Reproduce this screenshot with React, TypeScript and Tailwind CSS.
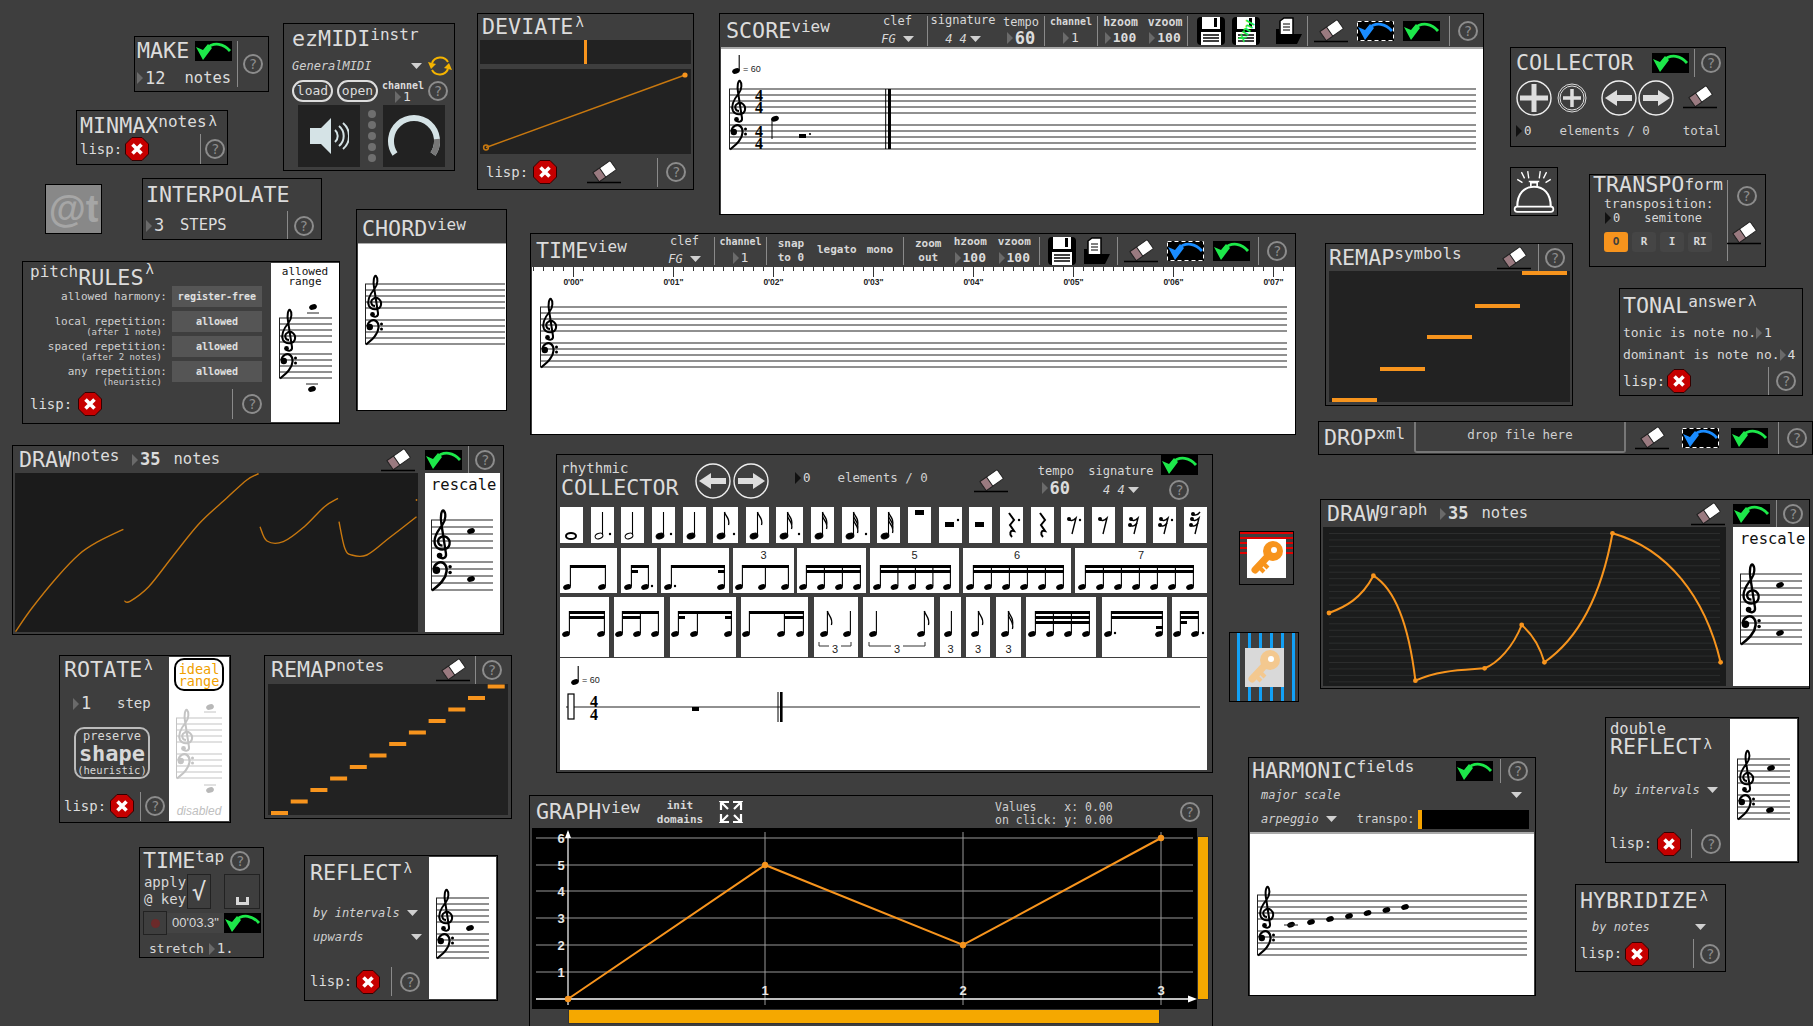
import React from "react";
import clsx from "clsx";

type Kids = { className?: string; children?: React.ReactNode };

const Win = ({ className, children }: Kids) => (
  <div className={clsx("absolute overflow-hidden border border-black bg-[#3e3e3e]", className)}>{children}</div>
);

const Title = ({ t, pre, sup, lam, className }: { t: string; pre?: string; sup?: string; lam?: boolean; className?: string }) => (
  <div className={clsx("flex items-start whitespace-nowrap text-[21.7px] leading-[24px] text-[#dcdcdc]", className)}>
    {pre && <span className="mt-[1px] text-[16px] leading-[18px]">{pre}</span>}
    <span className={pre ? "mt-[4px]" : ""}>{t}</span>
    {sup && <span className="text-[16px] leading-[16px]">{sup}</span>}
    {lam && <span className="ml-[2px] text-[14px] leading-[14px]">λ</span>}
  </div>
);

const Sep = ({ className }: { className?: string }) => <div className={clsx("w-px shrink-0 bg-[#8a8a8a]", className)} />;

const Help = ({ className }: { className?: string }) => (
  <div className={clsx("flex h-[20px] w-[20px] shrink-0 items-center justify-center rounded-full border-2 border-[#8c8c8c] text-[14px] leading-none text-[#8c8c8c]", className)}>
    ?
  </div>
);

const Tri = ({ dark }: { dark?: boolean }) => (
  <svg width="6" height="12" viewBox="0 0 6 12" className="shrink-0">
    <polygon points="0,0 6,6 0,12" fill={dark ? "#111" : "#6a6a6a"} />
  </svg>
);

const Drop = ({ className }: { className?: string }) => (
  <svg width="11" height="6" viewBox="0 0 11 6" className={clsx("shrink-0", className)}>
    <polygon points="0,0 11,0 5.5,6" fill="#d0d0d0" />
  </svg>
);

const Octagon = () => (
  <svg width="24" height="24" viewBox="0 0 24 24" className="shrink-0">
    <polygon points="7,0.5 17,0.5 23.5,7 23.5,17 17,23.5 7,23.5 0.5,17 0.5,7" fill="#c60000" stroke="#300" />
    <path d="M7.5 7.5 L16.5 16.5 M16.5 7.5 L7.5 16.5" stroke="white" strokeWidth="3.6" />
  </svg>
);

const Lisp = ({ gap }: { gap?: string }) => (
  <div className={clsx("flex items-center text-[14px] text-[#dcdcdc]", gap ?? "gap-[5px]")}>
    <span>lisp:</span>
    <Octagon />
  </div>
);

const Eraser = ({ className }: { className?: string }) => (
  <svg width="34" height="24" viewBox="0 0 34 24" className={clsx("shrink-0", className)}>
    <g transform="rotate(-35 17 11)">
      <rect x="7" y="6" width="21" height="11" rx="1" fill="white" stroke="#222" />
      <rect x="7" y="6" width="8" height="11" fill="#9a7a80" stroke="#222" />
    </g>
    <line x1="0" y1="22.5" x2="34" y2="22.5" stroke="black" strokeWidth="1.5" />
  </svg>
);

const Undo = ({ blue, className }: { blue?: boolean; className?: string }) => {
  const c = blue ? "#1a8cff" : "#1de84a";
  return (
    <svg width="37" height="20" viewBox="0 0 37 20" className={clsx("shrink-0", className)}>
      <rect width="37" height="20" fill="black" />
      {blue && <rect x="0.5" y="0.5" width="36" height="19" fill="none" stroke="white" strokeDasharray="4 3" />}
      <path d="M35 10 C29 3 19 0 11 8" fill="none" stroke={c} strokeWidth="2.8" />
      <polygon points="1,6 8,9 13,3 17,7 8,19" fill={c} />
    </svg>
  );
};

const Save = ({ xml }: { xml?: boolean }) => (
  <svg width="28" height="28" viewBox="0 0 28 28" className="shrink-0">
    <rect width="28" height="28" rx="4" fill="black" />
    <rect x="5" y="0" width="18" height="12" fill="white" />
    <rect x="17" y="1" width="3" height="9" fill="black" />
    <rect x="4" y="15" width="20" height="13" fill="white" />
    <path d="M6 18H22M6 21H22M6 24H22" stroke="black" strokeWidth="1.4" />
    {xml && (
      <text x="14" y="18" textAnchor="middle" fontSize="13" fontFamily="Liberation Sans" fontWeight="bold" fill="#1de84a" transform="rotate(-60 14 14)">
        xml
      </text>
    )}
  </svg>
);

const Folder = () => (
  <svg width="28" height="28" viewBox="0 0 28 28" className="shrink-0">
    <path d="M5 24V4L9 1H18V20H5" fill="white" stroke="black" strokeWidth="1.5" />
    <path d="M8 7H15M8 10H15M8 13H15" stroke="black" />
    <polygon points="5,27 1,27 1,12 4,12 5,17 27,17 22,27" fill="black" />
  </svg>
);

const Treble = ({ x, y, s = 1, c = "black" }: { x: number; y: number; s?: number; c?: string }) => (
  <g transform={`translate(${x} ${y}) scale(${s})`}>
    <path
      d="M9 31 C5 31 4 26 7 24 C11 21 16 25 15 30 C14 35 6 36 3 31 C0 25 5 18 9 13 C12 9 12 3 10 1 C8 0 7 6 8 12 L12 38 C12.5 42 8 43 6 40"
      fill="none"
      stroke={c}
      strokeWidth="2"
    />
    <circle cx="6.5" cy="39.5" r="2.4" fill={c} />
  </g>
);

const Bass = ({ x, y, s = 1, c = "black" }: { x: number; y: number; s?: number; c?: string }) => (
  <g transform={`translate(${x} ${y}) scale(${s})`}>
    <circle cx="3.8" cy="7" r="3.2" fill={c} />
    <path d="M1.5 6 C2 1 7 -1 10 1 C14 4 13 11 9 16 C7 19 3 22 0 24.5" fill="none" stroke={c} strokeWidth="2.2" />
    <circle cx="15.5" cy="4" r="1.5" fill={c} />
    <circle cx="15.5" cy="9" r="1.5" fill={c} />
  </g>
);

const Head = ({ x, y, c = "black" }: { x: number; y: number; c?: string }) => (
  <ellipse cx={x} cy={y} rx="4" ry="2.7" transform={`rotate(-20 ${x} ${y})`} fill={c} />
);

const Staff = ({
  w,
  gap = 6,
  className,
  c = "#222",
  children,
}: {
  w: number;
  gap?: number;
  className?: string;
  c?: string;
  children?: React.ReactNode;
}) => {
  const top = 12;
  const rows = [0, 1, 2, 3, 4, 6, 7, 8, 9, 10];
  const s = gap / 6;
  return (
    <svg width={w} height={top + gap * 10 + 10} className={clsx("block shrink-0 overflow-visible", className)}>
      {rows.map((r) => (
        <line key={r} x1="0" x2={w} y1={top + r * gap} y2={top + r * gap} stroke={c} strokeWidth="1.2" />
      ))}
      <line x1="0.5" x2="0.5" y1={top} y2={top + gap * 10} stroke={c} />
      <Treble x={1} y={top - 9 * s} s={s} c={c === "#222" ? "black" : c} />
      <Bass x={1} y={top + gap * 6} s={s} c={c === "#222" ? "black" : c} />
      {children}
    </svg>
  );
};

const TempoMark = ({ className }: { className?: string }) => (
  <svg width="40" height="20" viewBox="0 0 40 20" className={clsx("block shrink-0", className)}>
    <Head x={4} y={16} />
    <line x1="7.2" x2="7.2" y1="15" y2="0" stroke="black" strokeWidth="1.1" />
    <text x="11" y="17" fontSize="9" fontFamily="Liberation Sans" fill="#222">
      = 60
    </text>
  </svg>
);

const Circ = ({ dir, r = 17 }: { dir: "l" | "r" | "p"; r?: number }) => (
  <svg width={r * 2 + 2} height={r * 2 + 2} viewBox="-18 -18 36 36" className="shrink-0">
    <circle r="17" fill="none" stroke="#eee" strokeWidth="1.4" />
    {dir === "p" && <path d="M0 -14V14M-14 0H14" stroke="#ddd" strokeWidth="5" />}
    {dir === "l" && <polygon points="-14,0 -2,-8 -2,-3 13,-3 13,3 -2,3 -2,8" fill="#ddd" />}
    {dir === "r" && <polygon points="14,0 2,-8 2,-3 -13,-3 -13,3 2,3 2,8" fill="#ddd" />}
  </svg>
);

const SmallPlus = () => (
  <svg width="30" height="30" viewBox="-15 -15 30 30" className="shrink-0">
    <circle r="14" fill="none" stroke="#ddd" />
    <circle r="12" fill="none" stroke="#ddd" />
    <path d="M0 -9V9M-9 0H9" stroke="#ddd" strokeWidth="3.5" />
  </svg>
);

const Ruler = () => {
  const minor = Array.from({ length: 76 }, (_, i) => 1.5 + i * 10);
  return (
    <svg width="764" height="26" className="block shrink-0">
      {minor.map((x, i) => (
        <line key={i} x1={x} x2={x} y1="0" y2={i % 10 === 4 ? 10 : 4} stroke="#333" />
      ))}
      {[0, 1, 2, 3, 4, 5, 6, 7].map((i) => (
        <text key={i} x={41.5 + i * 100} y="18" textAnchor="middle" fontSize="8.5" fontWeight="bold" fontFamily="Liberation Sans" fill="#222">
          {`0'0${i}"`}
        </text>
      ))}
    </svg>
  );
};

// rhythm cells
type Single = { w: number; hollow?: boolean; stem?: boolean; dot?: boolean; flags?: number; whole?: boolean };

const singles: Single[] = [
  { w: 23, whole: true },
  { w: 23, hollow: true, stem: true, dot: true },
  { w: 23, hollow: true, stem: true },
  { w: 23, stem: true, dot: true },
  { w: 23, stem: true },
  { w: 25, stem: true, dot: true, flags: 1 },
  { w: 23, stem: true, flags: 1 },
  { w: 27, stem: true, dot: true, flags: 2 },
  { w: 23, stem: true, flags: 2 },
  { w: 28, stem: true, dot: true, flags: 3 },
  { w: 23, stem: true, flags: 3 },
];

const SingleNote = ({ n }: { n: Single }) => (
  <div className="h-full bg-white" style={{ width: n.w }}>
    <svg width={n.w} height="36">
      {n.whole ? (
        <ellipse cx="11" cy="29" rx="5" ry="3" fill="none" stroke="black" strokeWidth="2" />
      ) : (
        <>
          <ellipse cx="8" cy="29" rx="4" ry="2.7" transform="rotate(-20 8 29)" fill={n.hollow ? "white" : "black"} stroke="black" />
          <line x1="11.5" x2="11.5" y1="28" y2="5" stroke="black" strokeWidth="1.1" />
          {Array.from({ length: n.flags ?? 0 }, (_, i) => (
            <path key={i} d={`M11.5 ${5 + i * 4} c1 5 6 6 4 13`} fill="none" stroke="black" strokeWidth="1.3" />
          ))}
          {n.dot && <circle cx={n.w - 4} cy="27" r="1.2" fill="black" />}
        </>
      )}
    </svg>
  </div>
);

const rests: { w: number; kind: string; dot?: boolean }[] = [
  { w: 23, kind: "whole" },
  { w: 23, kind: "half", dot: true },
  { w: 23, kind: "half" },
  { w: 23, kind: "q", dot: true },
  { w: 23, kind: "q" },
  { w: 23, kind: "e", dot: true },
  { w: 23, kind: "e" },
  { w: 23, kind: "s" },
  { w: 23, kind: "s", dot: true },
  { w: 23, kind: "t" },
];

const Rest = ({ r }: { r: { w: number; kind: string; dot?: boolean } }) => (
  <div className="h-full bg-white" style={{ width: r.w }}>
    <svg width={r.w} height="36">
      {r.kind === "whole" && <rect x="7" y="3" width="9" height="5" fill="black" />}
      {r.kind === "half" && <rect x="6" y="15" width="9" height="5" fill="black" />}
      {r.kind === "q" && <path d="M9 6 L14 13 L10 18 L14 24 C10 23 9 27 12 30" fill="none" stroke="black" strokeWidth="2" />}
      {(r.kind === "e" || r.kind === "s" || r.kind === "t") && (
        <>
          <path d="M7 12 C10 15 13 13 15 11 L11 27" fill="none" stroke="black" strokeWidth="1.4" />
          <circle cx="8" cy="12" r="2" fill="black" />
        </>
      )}
      {(r.kind === "s" || r.kind === "t") && (
        <>
          <path d="M6 18 C9 20 12 19 14 16" fill="none" stroke="black" strokeWidth="1.4" />
          <circle cx="7" cy="18" r="2" fill="black" />
        </>
      )}
      {r.kind === "t" && (
        <>
          <path d="M8 7 C10 9 14 8 16 5" fill="none" stroke="black" strokeWidth="1.4" />
          <circle cx="9" cy="7" r="2" fill="black" />
        </>
      )}
      {r.dot && <circle cx={r.w - 4} cy="13" r="1.2" fill="black" />}
    </svg>
  </div>
);

type Beam = { from: number; to: number; lvl: number };
type Group = {
  w: number;
  xs: number[];
  beams?: Beam[];
  label?: string;
  dots?: number[];
  flags?: number[];
  bracket?: [number, number];
  bottom?: string;
};

const Cell = ({ g, h, headY, topY }: { g: Group; h: number; headY: number; topY: number }) => (
  <div className="h-full shrink-0 bg-white" style={{ width: g.w }}>
    <svg width={g.w} height={h}>
      {g.label && (
        <text x={g.w / 2} y="11" fontSize="11" textAnchor="middle" fontFamily="Liberation Sans" fill="#222">
          {g.label}
        </text>
      )}
      {g.xs.map((x) => (
        <g key={x}>
          <Head x={x} y={headY} />
          <line x1={x + 3.4} x2={x + 3.4} y1={headY - 1} y2={topY} stroke="black" strokeWidth="1.1" />
        </g>
      ))}
      {g.beams?.map((b, i) => (
        <rect key={i} x={b.from + 3} y={topY + b.lvl * 5} width={b.to - b.from + 1} height="3" fill="black" />
      ))}
      {g.flags?.map((x, i) => (
        <path key={i} d={`M${x + 3.4} ${topY + i * 4} c1 5 6 7 4 14`} fill="none" stroke="black" strokeWidth="1.3" />
      ))}
      {g.dots?.map((x) => (
        <circle key={x} cx={x} cy={headY - 1} r="1.2" fill="black" />
      ))}
      {g.bracket && (
        <path
          d={`M${g.bracket[0]} 45 v4 h${(g.bracket[1] - g.bracket[0]) / 2 - 6} m12 0 h${(g.bracket[1] - g.bracket[0]) / 2 - 6} v-4`}
          fill="none"
          stroke="#333"
        />
      )}
      {g.bottom && (
        <text x={g.bracket ? (g.bracket[0] + g.bracket[1]) / 2 : g.w / 2} y="56" fontSize="11" textAnchor="middle" fontFamily="Liberation Sans" fill="#222">
          {g.bottom}
        </text>
      )}
    </svg>
  </div>
);

const even = (n: number, step: number, from: number) => Array.from({ length: n }, (_, i) => from + i * step);

const row2: Group[] = [
  { w: 57, xs: [7, 42], beams: [{ from: 7, to: 42, lvl: 0 }] },
  { w: 36, xs: [7, 24], beams: [{ from: 7, to: 24, lvl: 0 }, { from: 7, to: 13, lvl: 1 }], dots: [31] },
  { w: 68, xs: [7, 60], beams: [{ from: 7, to: 60, lvl: 0 }, { from: 54, to: 60, lvl: 1 }], dots: [14] },
  { w: 61, xs: [6, 29, 52], beams: [{ from: 6, to: 52, lvl: 0 }], label: "3" },
  { w: 69, xs: even(4, 18, 6), beams: [{ from: 6, to: 60, lvl: 0 }, { from: 6, to: 60, lvl: 1 }] },
  { w: 89, xs: even(5, 17.5, 7), beams: [{ from: 7, to: 77, lvl: 0 }, { from: 7, to: 77, lvl: 1 }], label: "5" },
  { w: 108, xs: even(6, 18, 7), beams: [{ from: 7, to: 97, lvl: 0 }, { from: 7, to: 97, lvl: 1 }], label: "6" },
  { w: 132, xs: even(7, 18, 7), beams: [{ from: 7, to: 115, lvl: 0 }, { from: 7, to: 115, lvl: 1 }], label: "7" },
];

const row3: Group[] = [
  { w: 49, xs: [6, 41], beams: [{ from: 6, to: 41, lvl: 0 }, { from: 6, to: 41, lvl: 1 }] },
  { w: 50, xs: [5, 23, 41], beams: [{ from: 5, to: 41, lvl: 0 }, { from: 5, to: 23, lvl: 1 }] },
  { w: 66, xs: [5, 24, 58], beams: [{ from: 5, to: 58, lvl: 0 }, { from: 5, to: 11, lvl: 1 }, { from: 52, to: 58, lvl: 1 }] },
  { w: 67, xs: [5, 40, 59], beams: [{ from: 5, to: 59, lvl: 0 }, { from: 40, to: 59, lvl: 1 }] },
  { w: 44, xs: [10, 33], flags: [10], bracket: [5, 37], bottom: "3" },
  { w: 71, xs: [10, 58], flags: [58], bracket: [6, 62], bottom: "3" },
  { w: 21, xs: [8], bottom: "3" },
  { w: 24, xs: [9], flags: [9], bottom: "3" },
  { w: 25, xs: [9], flags: [9, 9], bottom: "3" },
  { w: 70, xs: even(4, 18, 6), beams: [{ from: 6, to: 60, lvl: 0 }, { from: 6, to: 60, lvl: 1 }, { from: 6, to: 60, lvl: 2 }] },
  { w: 65, xs: [6, 57], beams: [{ from: 6, to: 57, lvl: 0 }, { from: 6, to: 57, lvl: 1 }, { from: 51, to: 57, lvl: 3 }], dots: [13] },
  { w: 35, xs: [5, 23], beams: [{ from: 5, to: 23, lvl: 0 }, { from: 5, to: 23, lvl: 1 }, { from: 5, to: 11, lvl: 2 }], dots: [31] },
];

const GraphPlot = () => {
  const xs = [36, 233, 431, 629];
  const ys = [10, 37, 63, 90, 117, 144];
  const labels = ["6", "5", "4", "3", "2", "1"];
  return (
    <svg width="665" height="181" className="block">
      <rect width="665" height="181" fill="black" />
      {ys.map((y) => (
        <line key={y} x1="4" x2="661" y1={y} y2={y} stroke="#666" strokeWidth="1.3" />
      ))}
      {xs.slice(1).map((x) => (
        <line key={x} x1={x} x2={x} y1="4" y2="177" stroke="#999" />
      ))}
      <line x1="36" x2="36" y1="4" y2="177" stroke="white" strokeWidth="1.2" />
      <polygon points="36,2 33,10 39,10" fill="white" />
      <line x1="4" x2="660" y1="171" y2="171" stroke="white" strokeWidth="1.3" />
      <polygon points="665,171 656,167.5 656,174.5" fill="white" />
      {labels.map((l, i) => (
        <text key={l} x="29" y={ys[i] + 5} fontSize="13" fontWeight="bold" textAnchor="middle" fontFamily="Liberation Sans" fill="#e8e8e8">
          {l}
        </text>
      ))}
      {["1", "2", "3"].map((l, i) => (
        <text key={l} x={xs[i + 1]} y="167" fontSize="13" fontWeight="bold" textAnchor="middle" fontFamily="Liberation Sans" fill="#e8e8e8">
          {l}
        </text>
      ))}
      <polyline points="36,171 233,37 431,117 629,10" fill="none" stroke="#f7941d" strokeWidth="2" />
      {[[36, 171], [233, 37], [431, 117], [629, 10]].map(([x, y]) => (
        <circle key={x} cx={x} cy={y} r="3.2" fill="#f7941d" />
      ))}
    </svg>
  );
};

const Key = ({ c }: { c: string }) => (
  <svg width="34" height="36" viewBox="0 0 34 36">
    <path d="M19 15 L5 30" stroke={c} strokeWidth="7" strokeLinecap="round" />
    <path d="M10 28 L14 32 M14 24 L18 28" stroke={c} strokeWidth="4" />
    <circle cx="23" cy="11" r="10" fill={c} />
    <circle cx="24" cy="10" r="3" fill="white" />
  </svg>
);

const remapNotes = Array.from({ length: 12 }, (_, i) => ({ x: 3 + i * 19.7, y: 127 - i * 11.5 }));

const DrawGraphPanel = () => {
  const stripes = Array.from({ length: 24 }, (_, i) => 6.5 + i * 6.45);
  return (
    <svg width="403" height="159" className="block shrink-0">
      <rect width="403" height="159" fill="#1b1c1c" />
      {stripes.map((y) => (
        <line key={y} x1="6" x2="397" y1={y} y2={y} stroke="#2c2d2d" />
      ))}
      <path
        d="M6 86 C22 80 38 72 50.4 48.7 C72 62 86 100 92.4 153.7 C115 143 140 143 161.6 141.3 C175 136 190 120 198.7 98 C208 106 217 120 221.4 135.3 C255 112 278 70 289.5 6.3 C345 22 382 70 397.6 135.3"
        fill="none"
        stroke="#f7941d"
        strokeWidth="2"
      />
      {[[6, 86], [50.4, 48.7], [92.4, 153.7], [161.6, 141.3], [198.7, 98], [221.4, 135.3], [289.5, 6.3], [397.6, 135.3]].map(([x, y]) => (
        <circle key={x} cx={x} cy={y} r="2.4" fill="#f7941d" />
      ))}
    </svg>
  );
};

// smooth line through the sampled points of a drawn stroke
const smooth = (p: number[][]) => {
  let d = `M${p[0][0]} ${p[0][1]}`;
  for (let i = 0; i < p.length - 1; i++) {
    const a = p[Math.max(i - 1, 0)];
    const b = p[i];
    const c = p[i + 1];
    const e = p[Math.min(i + 2, p.length - 1)];
    d += ` C${b[0] + (c[0] - a[0]) / 6} ${b[1] + (c[1] - a[1]) / 6} ${c[0] - (e[0] - b[0]) / 6} ${c[1] - (e[1] - b[1]) / 6} ${c[0]} ${c[1]}`;
  }
  return d;
};

const strokes = [
  [[0.5, 158.7], [17, 135], [42.5, 103.7], [64.5, 81], [83, 68.7], [108.4, 56.3]],
  [[109.4, 128], [115, 128.3], [133.7, 113.7], [157.4, 83.7], [184.5, 50.3], [211.5, 25.3], [231.8, 7], [243.6, 0.6]],
  [[245, 53.7], [252, 68], [268.3, 68.7], [289.3, 53.7], [309.5, 33.7], [323, 25.3]],
  [[324, 48.7], [329.8, 75.3], [336.6, 82], [351.8, 82], [373.8, 65.3], [401.5, 43.7]],
];

const DrawNotesPanel = () => (
  <svg width="403" height="159" className="block shrink-0">
    <rect width="403" height="159" fill="#1b1b1b" />
    {strokes.map((s, i) => (
      <path key={i} d={smooth(s)} fill="none" stroke="#c8780f" strokeWidth="1.4" />
    ))}
    <circle cx="401.5" cy="27" r="0.9" fill="#c8780f" />
  </svg>
);

const HLabel = ({ className, children }: Kids) => <div className={clsx("text-center leading-[14px] text-[#d8d8d8]", className)}>{children}</div>;

const Num = ({ v, className, dark }: { v: string; className?: string; dark?: boolean }) => (
  <div className={clsx("flex items-center gap-[2px] whitespace-nowrap text-[#dcdcdc]", className)}>
    <Tri dark={dark} />
    <span>{v}</span>
  </div>
);

export default function App() {
  return (
    <div className="relative h-[1026px] w-[1813px] overflow-hidden bg-[#3e3e3e] font-['DejaVu_Sans_Mono',monospace]">
      {/* MAKE */}
      <Win className="left-[134px] top-[36px] flex h-[56px] w-[135px]">
        <div className="flex w-[102px] flex-col pl-[2px] pt-[2px]">
          <div className="flex items-center gap-[6px]">
            <Title t="MAKE" />
            <Undo />
          </div>
          <div className="mt-[5px] flex items-center">
            <Num v="12" className="text-[17px] leading-[20px]" />
            <span className="ml-[19px] text-[15.5px] leading-[20px] text-[#dcdcdc]">notes</span>
          </div>
        </div>
        <Sep className="my-[4px]" />
        <Help className="ml-[5px] mt-[17px]" />
      </Win>

      {/* MINMAX */}
      <Win className="left-[76px] top-[110px] h-[55px] w-[152px] pl-[3px] pt-[3px]">
        <Title t="MINMAX" sup="notes" lam />
        <div className="mt-[-4px] flex items-center">
          <Lisp gap="gap-[3px]" />
          <Sep className="ml-[51px] h-[30px]" />
          <Help className="ml-[4px]" />
        </div>
      </Win>

      {/* ezMIDI */}
      <Win className="left-[283px] top-[23px] h-[148px] w-[172px] pl-[8px] pt-[3px]">
        <Title t="ezMIDI" sup="instr" />
        <div className="mt-[1px] flex h-[27px] items-center text-[12px] italic text-[#d0d0d0]">
          <span>GeneralMIDI</span>
          <Drop className="ml-[40px]" />
          <svg width="24" height="26" viewBox="0 0 24 26" className="ml-[6px]">
            <path d="M4 10 A9 9 0 0 1 20 9 M20 16 A9 9 0 0 1 4 17" fill="none" stroke="#f5b400" strokeWidth="2" />
            <polygon points="0,9 8,11 3,16" fill="#f5b400" />
            <polygon points="24,17 16,15 21,10" fill="#f5b400" />
          </svg>
        </div>
        <div className="flex h-[24px] items-center gap-[4px] text-[13px] text-[#dcdcdc]">
          <div className="flex h-[22px] w-[41px] shrink-0 items-center justify-center rounded-[12px] border-2 border-[#ddd]">load</div>
          <div className="flex h-[22px] w-[41px] shrink-0 items-center justify-center rounded-[12px] border-2 border-[#ddd]">open</div>
          <div className="flex w-[42px] shrink-0 flex-col items-center">
            <span className="text-[10px] font-bold leading-[11px]">channel</span>
            <Num v="1" className="text-[13px] leading-[12px]" />
          </div>
          <Help />
        </div>
        <div className="ml-[6px] mt-[2px] flex items-center">
          <div className="flex h-[62px] w-[62px] items-center justify-center bg-[#222]">
            <svg width="40" height="38" viewBox="0 0 40 38">
              <polygon points="1,11 12,11 22,1 22,37 12,27 1,27" fill="#d5e3e6" />
              <path d="M26 13 A8 8 0 0 1 26 25 M30 9 A13 13 0 0 1 30 29 M34 6 A17 17 0 0 1 34 32" fill="none" stroke="#d5e3e6" strokeWidth="2" />
            </svg>
          </div>
          <div className="flex w-[23px] flex-col items-center gap-[3px]">
            {[1, 2, 3, 4, 5].map((i) => (
              <div key={i} className="h-[8px] w-[8px] rounded-full bg-[#6f6f6f]" />
            ))}
          </div>
          <div className="flex h-[62px] w-[62px] items-center justify-center bg-[#222]">
            <svg width="54" height="48" viewBox="0 0 54 48">
              <path d="M8 42 A23 23 0 1 1 46 42" fill="none" stroke="#d5e3e6" strokeWidth="6" />
              <path d="M50 27 A23 23 0 0 1 46 42" fill="none" stroke="#777" strokeWidth="6" />
            </svg>
          </div>
        </div>
      </Win>

      {/* @t */}
      <Win className="left-[45px] top-[184px] flex h-[50px] w-[57px] items-center justify-center border-[#555] bg-[#888] font-['Liberation_Sans'] text-[38px] font-bold leading-none text-[#a6a6a6]">
        @t
      </Win>

      {/* INTERPOLATE */}
      <Win className="left-[142px] top-[178px] h-[62px] w-[180px] pl-[3px] pt-[4px]">
        <Title t="INTERPOLATE" />
        <div className="mt-[4px] flex h-[30px] items-center">
          <Num v="3" className="w-[34px] text-[17px]" />
          <span className="text-[15.5px] text-[#dcdcdc]">STEPS</span>
          <Sep className="ml-[60px] h-[30px]" />
          <Help className="ml-[6px]" />
        </div>
      </Win>

      {/* pitchRULES */}
      <Win className="left-[22px] top-[261px] flex h-[163px] w-[318px]">
        <div className="flex w-[248px] flex-col pl-[7px]">
          <Title pre="pitch" t="RULES" lam />
          <div className="mt-[-4px] flex flex-col gap-[4px] pr-[9px] text-[11px] leading-[12px] text-[#d0d0d0]">
            {[
              ["allowed harmony:", "", "register-free"],
              ["local repetition:", "(after 1 note)", "allowed"],
              ["spaced repetition:", "(after 2 notes)", "allowed"],
              ["any repetition:", "(heuristic)", "allowed"],
            ].map(([a, b, c]) => (
              <div key={a} className="flex h-[21px] items-center justify-end gap-[5px]">
                <div className={clsx("flex flex-col items-end", b && "translate-y-[5px]")}>
                  <span>{a}</span>
                  {b && <span className="pr-[5px] text-[9px] leading-[9px]">{b}</span>}
                </div>
                <div className="flex h-[21px] w-[90px] items-center justify-center bg-[#555] text-[10px] font-bold text-[#e0e0e0]">{c}</div>
              </div>
            ))}
          </div>
          <div className="mt-[7px] flex items-center">
            <Lisp gap="gap-[6px]" />
            <Sep className="ml-[130px] h-[30px]" />
            <Help className="ml-[9px]" />
          </div>
        </div>
        <div className="my-px flex w-[68px] flex-col items-center bg-white text-[11px] leading-[10px] text-[#111]">
          <div className="mt-[4px] text-center">
            allowed
            <br />
            range
          </div>
          <Staff w={53} className="mt-[19px]">
            <Head x={34} y={1} />
            <line x1="28" x2="40" y1="7" y2="7" stroke="#222" />
            <Head x={33} y={83} />
            <line x1="27" x2="39" y1="78" y2="78" stroke="#222" />
          </Staff>
        </div>
      </Win>

      {/* CHORD */}
      <Win className="left-[356px] top-[209px] flex h-[202px] w-[151px] flex-col">
        <Title t="CHORD" sup="view" className="pl-[5px] pt-[7px]" />
        <div className="ml-[1px] mt-[2px] flex-1 border-t border-[#aaa] bg-white pl-[7px] pt-[28px]">
          <Staff w={140} />
        </div>
      </Win>

      {/* DEVIATE */}
      <Win className="left-[477px] top-[13px] flex h-[177px] w-[217px] flex-col px-[2px]">
        <Title t="DEVIATE" lam className="pl-[2px] pt-[1px]" />
        <div className="mt-px flex h-[24px] justify-center bg-[#222]">
          <div className="h-full w-[3px] bg-[#f7941d]" />
        </div>
        <svg width="211" height="85" className="mt-[5px] block bg-[#222]">
          <line x1="6" y1="78.5" x2="205" y2="6" stroke="#c8780f" strokeWidth="1.4" />
          <circle cx="6" cy="78.5" r="2.4" fill="none" stroke="#c8780f" strokeWidth="1.5" />
          <circle cx="205" cy="6" r="2.6" fill="#f7941d" />
        </svg>
        <div className="mt-[3px] flex h-[30px] items-center pl-[6px]">
          <Lisp />
          <Eraser className="ml-[30px]" />
          <Sep className="ml-[36px] h-[29px]" />
          <Help className="ml-[8px]" />
        </div>
      </Win>

      {/* SCORE */}
      <Win className="left-[719px] top-[13px] flex h-[202px] w-[765px] flex-col">
        <div className="flex h-[33px] shrink-0 items-center text-[12px]">
          <Title t="SCORE" sup="view" className="w-[148px] pl-[6px]" />
          <div className="flex w-[59px] flex-col">
            <HLabel>clef</HLabel>
            <div className="mt-[2px] flex items-center justify-center gap-[7px] italic text-[#d8d8d8]">
              FG <Drop />
            </div>
          </div>
          <Sep className="h-[30px]" />
          <div className="flex w-[70px] flex-col">
            <HLabel>signature</HLabel>
            <div className="mt-[3px] flex items-center justify-center gap-[3px] italic text-[#d8d8d8]">
              4 4 <Drop />
            </div>
          </div>
          <div className="flex w-[46px] flex-col items-center">
            <HLabel>tempo</HLabel>
            <Num v="60" className="text-[17px] font-bold leading-[18px]" />
          </div>
          <Sep className="h-[30px]" />
          <div className="flex w-[52px] flex-col items-center">
            <HLabel className="text-[10px] font-bold">channel</HLabel>
            <Num v="1" className="text-[13px] leading-[18px]" />
          </div>
          <Sep className="h-[30px]" />
          <div className="flex w-[45px] flex-col items-center">
            <HLabel className="text-[11.5px] font-bold">hzoom</HLabel>
            <Num v="100" className="text-[13px] font-bold leading-[18px]" />
          </div>
          <div className="flex w-[44px] flex-col items-center">
            <HLabel className="text-[11.5px] font-bold">vzoom</HLabel>
            <Num v="100" className="text-[13px] font-bold leading-[18px]" />
          </div>
          <Sep className="h-[30px]" />
          <div className="ml-[9px] flex items-center gap-[7px]">
            <Save />
            <Save xml />
            <div className="ml-[8px]">
              <Folder />
            </div>
          </div>
          <Sep className="ml-[4px] h-[30px]" />
          <Eraser className="ml-[6px]" />
          <Undo blue className="ml-[9px]" />
          <Undo className="ml-[9px]" />
          <Sep className="ml-[9px] h-[30px]" />
          <Help className="ml-[8px]" />
        </div>
        <div className="ml-[1px] flex-1 border-t-2 border-[#aaa] bg-white pl-[8px] pt-[6px]">
          <TempoMark className="ml-[3px]" />
          <Staff w={747} className="mt-[2px]">
            <text x="26" y="24" fontSize="16" fontWeight="bold" fontFamily="Liberation Serif">4</text>
            <text x="26" y="36" fontSize="16" fontWeight="bold" fontFamily="Liberation Serif">4</text>
            <text x="26" y="60" fontSize="16" fontWeight="bold" fontFamily="Liberation Serif">4</text>
            <text x="26" y="72" fontSize="16" fontWeight="bold" fontFamily="Liberation Serif">4</text>
            <Head x={46} y={41.7} />
            <line x1="43" x2="43" y1="42" y2="62" stroke="black" />
            <rect x="70" y="57" width="7" height="4" fill="black" />
            <circle cx="81" cy="57" r="1.1" fill="black" />
            <line x1="156.7" x2="156.7" y1="12" y2="72" stroke="black" />
            <rect x="159" y="12" width="3" height="60" fill="black" />
          </Staff>
        </div>
      </Win>

      {/* COLLECTOR */}
      <Win className="left-[1510px] top-[47px] flex h-[100px] w-[216px] flex-col pl-[5px]">
        <div className="flex h-[29px] items-center">
          <Title t="COLLECTOR" className="w-[136px]" />
          <Undo />
          <Sep className="ml-[5px] h-[28px]" />
          <Help className="ml-[6px]" />
        </div>
        <div className="mt-[3px] flex items-center">
          <Circ dir="p" />
          <div className="ml-[5px]">
            <SmallPlus />
          </div>
          <div className="ml-[14px]">
            <Circ dir="l" />
          </div>
          <div className="ml-[1px]">
            <Circ dir="r" />
          </div>
          <Eraser className="ml-[9px] mt-[-2px]" />
        </div>
        <div className="mt-[6px] flex items-center text-[12.5px] text-[#d0d0d0]">
          <Num v="0" dark />
          <span className="ml-[28px]">elements / 0</span>
          <span className="ml-[33px]">total</span>
        </div>
      </Win>

      {/* bell */}
      <Win className="left-[1510px] top-[167px] flex h-[49px] w-[48px] items-center justify-center">
        <svg width="42" height="44" viewBox="0 0 40 42">
          <path d="M4 35 C4 22 11 16 20 16 C29 16 36 22 36 35" fill="none" stroke="white" strokeWidth="2" />
          <rect x="1.5" y="35" width="37" height="5" rx="2.5" fill="none" stroke="white" strokeWidth="1.6" />
          <path d="M17 16 V12 H23 V16 M15 11 H25" fill="none" stroke="white" strokeWidth="1.6" />
          <path d="M8 2 L11 8 M14 1 L15 8 M32 2 L29 8 M26 1 L25 8 M4 9 L9 12 M36 9 L31 12" stroke="white" strokeWidth="1.3" />
        </svg>
      </Win>

      {/* TRANSPO */}
      <Win className="left-[1589px] top-[174px] flex h-[93px] w-[177px]">
        <div className="flex w-[137px] flex-col pl-[3px]">
          <Title t="TRANSPO" sup="form" className="items-center! leading-[20px]!" />
          <div className="mt-[1px] pl-[11px] text-[13px] leading-[15px] text-[#d8d8d8]">transposition:</div>
          <div className="flex items-center pl-[12px] text-[12px] leading-[14px] text-[#d8d8d8]">
            <Num v="0" dark />
            <span className="ml-[24px]">semitone</span>
          </div>
          <div className="ml-[11px] mt-[7px] flex gap-[4px] text-[11px] font-bold text-[#d8d8d8]">
            <div className="flex h-[20px] w-[24px] items-center justify-center rounded-[3px] bg-[#f7941d] text-[#3e3e3e]">O</div>
            <div className="flex h-[20px] w-[24px] items-center justify-center rounded-[3px] bg-[#454545]">R</div>
            <div className="flex h-[20px] w-[24px] items-center justify-center rounded-[3px] bg-[#454545]">I</div>
            <div className="flex h-[20px] w-[24px] items-center justify-center rounded-[3px] bg-[#454545]">RI</div>
          </div>
        </div>
        <Sep className="my-[5px]" />
        <div className="flex flex-col items-center pl-[2px]">
          <Help className="mt-[11px] ml-[2px]" />
          <Eraser className="mt-[15px] ml-[-3px]" />
        </div>
      </Win>

      {/* REMAPsymbols */}
      <Win className="left-[1325px] top-[243px] flex h-[163px] w-[248px] flex-col">
        <div className="flex h-[27px] items-center pl-[3px]">
          <Title t="REMAP" sup="symbols" className="w-[168px]" />
          <Eraser />
          <Sep className="ml-[7px] h-[27px]" />
          <Help className="ml-[6px]" />
        </div>
        <svg width="241" height="131" className="ml-[3px] block bg-[#222]">
          {[[193, 0], [146, 33], [98, 64], [51, 96], [3, 127]].map(([x, y]) => (
            <rect key={x} x={x} y={y} width="45" height="4" fill="#f7941d" />
          ))}
        </svg>
      </Win>

      {/* TONAL */}
      <Win className="left-[1619px] top-[288px] h-[108px] w-[184px] pl-[3px] pt-[5px] text-[13px] text-[#d8d8d8]">
        <Title t="TONAL" sup="answer" lam />
        <div className="mt-[5px] flex items-center leading-[20px]">
          tonic is note no.
          <Num v="1" />
        </div>
        <div className="mt-[2px] flex items-center leading-[20px]">
          dominant is note no.
          <Num v="4" />
        </div>
        <div className="mt-[2px] flex items-center">
          <Lisp gap="gap-[2px]" />
          <Sep className="ml-[77px] h-[28px]" />
          <Help className="ml-[7px]" />
        </div>
      </Win>

      {/* DROP */}
      <Win className="left-[1318px] top-[421px] flex h-[34px] w-[495px] items-center pl-[5px]">
        <Title t="DROP" sup="xml" className="w-[90px]" />
        <div className="mt-[-3px] flex h-[32px] w-[212px] items-center justify-center rounded-b-[3px] border-2 border-t-0 border-[#777] text-[12.5px] text-[#cfcfcf]">
          drop file here
        </div>
        <Eraser className="ml-[9px]" />
        <Undo blue className="ml-[13px]" />
        <Undo className="ml-[12px]" />
        <Sep className="ml-[10px] h-[32px]" />
        <Help className="ml-[8px]" />
      </Win>

      {/* DRAWgraph */}
      <Win className="left-[1320px] top-[499px] h-[190px] w-[490px]">
        <div className="flex h-[27px] items-center pl-[6px]">
          <Title t="DRAW" sup="graph" className="w-[113px]" />
          <Num v="35" className="text-[17px] font-bold" />
          <span className="ml-[13px] text-[15.5px] text-[#dcdcdc]">notes</span>
          <Eraser className="ml-[163px]" />
          <Undo className="ml-[8px]" />
          <Sep className="ml-[6px] h-[27px]" />
          <Help className="ml-[6px]" />
        </div>
        <div className="flex gap-[7px] pl-[2px]">
          <DrawGraphPanel />
          <div className="h-[159px] w-[76px] bg-white pl-[7px] text-[15.5px] leading-[20px] text-[#111]">
            <div className="mt-[2px]">rescale</div>
            <Staff w={62} gap={7} className="mt-[13px]">
              <Head x={40} y={23} />
              <Head x={40} y={71} />
            </Staff>
          </div>
        </div>
      </Win>

      {/* DRAWnotes */}
      <Win className="left-[12px] top-[445px] h-[190px] w-[492px]">
        <div className="flex h-[27px] items-center pl-[6px]">
          <Title t="DRAW" sup="notes" className="w-[113px]" />
          <Num v="35" className="text-[17px] font-bold" />
          <span className="ml-[13px] text-[15.5px] text-[#dcdcdc]">notes</span>
          <Eraser className="ml-[161px]" />
          <Undo className="ml-[10px]" />
          <Sep className="ml-[6px] h-[27px]" />
          <Help className="ml-[6px]" />
        </div>
        <div className="flex gap-[7px] pl-[2px]">
          <DrawNotesPanel />
          <div className="h-[159px] w-[75px] bg-white pl-[6px] text-[15.5px] leading-[20px] text-[#111]">
            <div className="mt-[2px]">rescale</div>
            <Staff w={62} gap={7} className="mt-[13px]">
              <Head x={40} y={23} />
              <Head x={40} y={71} />
            </Staff>
          </div>
        </div>
      </Win>

      {/* rhythmic COLLECTOR */}
      <Win className="left-[556px] top-[454px] flex h-[319px] w-[657px] flex-col pl-[3px] pr-[5px]">
        <div className="flex h-[52px] shrink-0 items-center">
          <div className="mt-[-3px] w-[135px] pl-[1px]">
            <div className="text-[14px] leading-[16px] text-[#d8d8d8]">rhythmic</div>
            <Title t="COLLECTOR" />
          </div>
          <Circ dir="l" />
          <div className="ml-[2px]">
            <Circ dir="r" />
          </div>
          <div className="ml-[26px] mt-[-6px] flex items-center text-[12.5px] text-[#d0d0d0]">
            <Num v="0" dark />
            <span className="ml-[27px]">elements / 0</span>
          </div>
          <Eraser className="ml-[46px]" />
          <div className="ml-[26px] flex w-[44px] flex-col items-center text-[12px]">
            <HLabel>tempo</HLabel>
            <Num v="60" className="text-[17px] font-bold leading-[20px]" />
          </div>
          <div className="ml-[8px] flex w-[70px] flex-col items-center text-[12px]">
            <HLabel>signature</HLabel>
            <div className="mt-[3px] flex items-center gap-[3px] italic text-[#d8d8d8]">
              4 4 <Drop />
            </div>
          </div>
          <div className="ml-[5px] flex flex-col items-center self-start">
            <Undo />
            <Help className="mt-[5px]" />
          </div>
        </div>
        <div className="flex h-[36px] shrink-0 justify-between">
          {singles.map((n, i) => (
            <SingleNote key={i} n={n} />
          ))}
          {rests.map((r, i) => (
            <Rest key={i} r={r} />
          ))}
        </div>
        <div className="mt-[5px] flex h-[45px] shrink-0 justify-between">
          {row2.map((g, i) => (
            <Cell key={i} g={g} h={45} headY={39} topY={17} />
          ))}
        </div>
        <div className="mt-[4px] flex h-[60px] shrink-0 justify-between">
          {row3.map((g, i) => (
            <Cell key={i} g={g} h={60} headY={37} topY={14} />
          ))}
        </div>
        <div className="mb-[2px] mt-px flex-1 bg-white pl-[6px] pt-[8px]">
          <TempoMark className="ml-[5px]" />
          <svg width="634" height="36" className="mt-[5px] block overflow-visible">
            <line x1="0" x2="634" y1="16" y2="16" stroke="#222" strokeWidth="1.2" />
            <rect x="2" y="3" width="6" height="25" fill="white" stroke="black" strokeWidth="1.2" />
            <text x="24" y="16" fontSize="16" fontWeight="bold" fontFamily="Liberation Serif">4</text>
            <text x="24" y="29" fontSize="16" fontWeight="bold" fontFamily="Liberation Serif">4</text>
            <rect x="126" y="16" width="7" height="4" fill="black" />
            <line x1="212" x2="212" y1="1" y2="31" stroke="black" />
            <rect x="214" y="1" width="2.6" height="30" fill="black" />
          </svg>
        </div>
      </Win>

      {/* TIME */}
      <Win className="left-[530px] top-[233px] flex h-[202px] w-[766px] flex-col">
        <div className="flex h-[33px] shrink-0 items-center text-[11px]">
          <Title t="TIME" sup="view" className="w-[124px] pl-[5px]" />
          <div className="flex w-[59px] flex-col text-[12px]">
            <HLabel>clef</HLabel>
            <div className="mt-[2px] flex items-center justify-center gap-[7px] italic text-[#d8d8d8]">
              FG <Drop />
            </div>
          </div>
          <Sep className="h-[28px]" />
          <div className="flex w-[51px] flex-col items-center">
            <HLabel className="text-[10px] font-bold">channel</HLabel>
            <Num v="1" className="text-[13px] leading-[18px]" />
          </div>
          <Sep className="h-[28px]" />
          <HLabel className="ml-[9px] w-[30px] font-bold">
            snap
            <br />
            to 0
          </HLabel>
          <span className="ml-[11px] font-bold text-[#d8d8d8]">legato</span>
          <span className="ml-[10px] font-bold text-[#d8d8d8]">mono</span>
          <Sep className="ml-[10px] h-[28px]" />
          <HLabel className="ml-[9px] w-[30px] font-bold">
            zoom
            <br />
            out
          </HLabel>
          <div className="ml-[8px] flex w-[38px] flex-col items-center">
            <HLabel className="text-[11px] font-bold">hzoom</HLabel>
            <Num v="100" className="text-[13px] font-bold leading-[18px]" />
          </div>
          <div className="ml-[6px] flex w-[38px] flex-col items-center">
            <HLabel className="text-[11px] font-bold">vzoom</HLabel>
            <Num v="100" className="text-[13px] font-bold leading-[18px]" />
          </div>
          <Sep className="ml-[6px] h-[28px]" />
          <div className="ml-[8px]">
            <Save />
          </div>
          <div className="ml-[7px]">
            <Folder />
          </div>
          <Sep className="ml-[6px] h-[28px]" />
          <Eraser className="ml-[6px]" />
          <Undo blue className="ml-[9px]" />
          <Undo className="ml-[9px]" />
          <Sep className="ml-[8px] h-[28px]" />
          <Help className="ml-[8px]" />
        </div>
        <div className="ml-[1px] flex-1 bg-white">
          <Ruler />
          <Staff w={747} className="ml-[8px] mt-[2px]" />
        </div>
      </Win>

      {/* ROTATE */}
      <Win className="left-[59px] top-[655px] flex h-[168px] w-[172px]">
        <div className="flex w-[109px] flex-col pl-[4px]">
          <Title t="ROTATE" lam className="pt-[2px]" />
          <div className="ml-[9px] mt-[9px] flex items-center text-[#dcdcdc]">
            <Num v="1" className="w-[44px] text-[17px]" />
            <span className="text-[14px]">step</span>
          </div>
          <div className="ml-[10px] mt-[10px] flex h-[52px] w-[76px] flex-col items-center justify-center rounded-[10px] border-2 border-[#bbb] text-[#d8d8d8]">
            <span className="text-[12px] leading-[14px]">preserve</span>
            <span className="text-[22px] font-bold leading-[21px]">shape</span>
            <span className="text-[10.5px] leading-[12px]">(heuristic)</span>
          </div>
          <div className="mt-[13px] flex items-center">
            <Lisp gap="gap-[4px]" />
            <Sep className="ml-[6px] h-[29px]" />
            <Help className="ml-[4px]" />
          </div>
        </div>
        <div className="my-px flex w-[60px] flex-col items-center bg-white">
          <div className="mt-[1px] flex h-[33px] w-[50px] items-center justify-center rounded-[10px] border-2 border-black text-center text-[13.5px] leading-[12px] text-[#f0a000]">
            ideal
            <br />
            range
          </div>
          <Staff w={46} c="#c4c4c4" className="mt-[15px]">
            <Head x={34} y={1} c="#b8b8b8" />
            <line x1="28" x2="40" y1="6" y2="6" stroke="#c4c4c4" />
            <Head x={34} y={84} c="#b8b8b8" />
            <line x1="28" x2="40" y1="79" y2="79" stroke="#c4c4c4" />
          </Staff>
          <span className="mt-[14px] font-['Liberation_Sans'] text-[12px] italic text-[#c0c0c0]">disabled</span>
        </div>
      </Win>

      {/* REMAPnotes */}
      <Win className="left-[264px] top-[655px] flex h-[164px] w-[248px] flex-col">
        <div className="flex h-[28px] items-center pl-[6px]">
          <Title t="REMAP" sup="notes" className="w-[165px]" />
          <Eraser />
          <Sep className="ml-[5px] h-[28px]" />
          <Help className="ml-[6px]" />
        </div>
        <svg width="240" height="131" className="ml-[3px] block bg-[#222]">
          {remapNotes.map((n) => (
            <rect key={n.x} x={n.x} y={n.y} width="17" height="4" fill="#f7941d" />
          ))}
        </svg>
      </Win>

      {/* TIMEtap */}
      <Win className="left-[139px] top-[847px] h-[111px] w-[125px] pl-[3px] text-[#d8d8d8]">
        <div className="flex items-center pt-[1px]">
          <Title t="TIME" sup="tap" />
          <Help className="ml-[6px]" />
        </div>
        <div className="mt-[1px] flex items-start">
          <div className="w-[44px] text-center text-[14px] leading-[17px]">
            apply
            <br />
            @ key
          </div>
          <div className="flex h-[35px] w-[24px] items-center justify-center border border-[#222] text-[24px] leading-none text-[#e0e0e0]">√</div>
          <div className="ml-[13px] flex h-[35px] w-[36px] items-end justify-center border border-[#222] pb-[3px]">
            <div className="h-[8px] w-[13px] border-x-[3px] border-b-[3px] border-[#d8d8d8]" />
          </div>
        </div>
        <div className="mt-[2px] flex h-[24px] items-center">
          <div className="flex h-[24px] w-[24px] items-center justify-center border border-[#222]">
            <div className="h-[9px] w-[9px] rounded-full bg-[#6b2a2a]" />
          </div>
          <div className="flex h-[20px] w-[57px] items-center justify-center bg-[#444] font-['Liberation_Sans'] text-[13px]">00'03.3"</div>
          <Undo />
        </div>
        <div className="ml-[6px] mt-[3px] flex items-center gap-[5px] text-[13px]">
          stretch
          <Num v="1." className="text-[14px]" />
        </div>
      </Win>

      {/* REFLECT */}
      <Win className="left-[304px] top-[855px] flex h-[146px] w-[194px]">
        <div className="flex w-[124px] flex-col pl-[5px]">
          <Title t="REFLECT" lam className="pt-[5px]" />
          <div className="ml-[3px] mt-[21px] flex flex-col gap-[10px] text-[12px] italic leading-[14px] text-[#d0d0d0]">
            <div className="flex items-center gap-[7px]">
              by intervals <Drop />
            </div>
            <div className="flex items-center justify-between pr-[7px]">
              upwards <Drop />
            </div>
          </div>
          <div className="mt-[23px] flex items-center">
            <Lisp gap="gap-[4px]" />
            <Sep className="ml-[11px] h-[29px]" />
            <Help className="ml-[8px]" />
          </div>
        </div>
        <div className="my-px w-[67px] bg-white pl-[7px] pt-[29px]">
          <Staff w={53}>
            <Head x={34} y={42} />
          </Staff>
        </div>
      </Win>

      {/* GRAPH */}
      <Win className="left-[529px] top-[795px] h-[232px] w-[684px]">
        <div className="flex h-[32px] items-center text-[11px]">
          <Title t="GRAPH" sup="view" className="w-[126px] pl-[6px]" />
          <HLabel className="mt-[2px] w-[48px] font-bold">
            init
            <br />
            domains
          </HLabel>
          <svg width="24" height="24" viewBox="0 0 24 24" className="ml-[15px]">
            <path d="M2 10V2H10L2 2 L9 9 M22 10V2H14L22 2 L15 9 M2 14V22H10L2 22 L9 15 M22 14V22H14L22 22 L15 15" fill="none" stroke="white" strokeWidth="2.2" />
          </svg>
          <div className="ml-[252px] mt-[3px] whitespace-pre text-[11.5px] leading-[13px] text-[#cfcfcf]">
            {"Values    x: 0.00\non click: y: 0.00"}
          </div>
          <Help className="ml-[67px]" />
        </div>
        <div className="flex pl-[2px]">
          <GraphPlot />
          <div className="mt-[8px] h-[164px] w-[12px] border border-[#333] bg-[#f5a800]" />
        </div>
        <div className="ml-[38px] h-[15px] w-[592px] border border-[#333] bg-[#f5a800]" />
      </Win>

      {/* keys */}
      <Win className="left-[1239px] top-[531px] flex h-[54px] w-[55px] items-center justify-center bg-[repeating-linear-gradient(180deg,#e00000_0,#e00000_2px,#3e3e3e_2px,#3e3e3e_5px)] bg-[length:100%_23px] bg-no-repeat">
        <div className="flex h-[39px] w-[39px] items-center justify-center bg-white">
          <Key c="#f7941d" />
        </div>
      </Win>
      <Win className="left-[1229px] top-[632px] flex h-[70px] w-[70px] items-center justify-center bg-[repeating-linear-gradient(90deg,#3e3e3e_0,#3e3e3e_7px,#12a0f5_7px,#12a0f5_10px,#3e3e3e_10px,#3e3e3e_11px)]">
        <div className="flex h-[39px] w-[39px] items-center justify-center bg-[#d9d9d9]">
          <Key c="#f3c88f" />
        </div>
      </Win>

      {/* HARMONIC */}
      <Win className="left-[1248px] top-[757px] flex h-[239px] w-[288px] flex-col">
        <div className="flex h-[25px] shrink-0 items-center pl-[3px]">
          <Title t="HARMONIC" sup="fields" className="w-[204px]" />
          <Undo />
          <Sep className="ml-[7px] h-[24px]" />
          <Help className="ml-[7px]" />
        </div>
        <div className="flex h-[24px] shrink-0 items-center pl-[12px] pr-[13px] text-[12px] italic text-[#d0d0d0]">
          major scale
          <Drop className="ml-auto" />
        </div>
        <div className="flex h-[24px] shrink-0 items-center pl-[12px] text-[12px] text-[#d0d0d0]">
          <span className="italic">arpeggio</span>
          <Drop className="ml-[7px]" />
          <span className="ml-[20px]">transpo:</span>
          <div className="ml-[3px] h-[19px] w-[111px] border-l-4 border-[#f7a400] bg-black" />
        </div>
        <div className="mx-[1px] mt-[1px] flex-1 border-t-2 border-[#aaa] bg-white pl-[7px] pt-[49px]">
          <Staff w={270}>
            {[[34, 41.7], [54, 39], [73, 36], [92, 33], [110.5, 30], [129.4, 27], [148, 24]].map(([x, y]) => (
              <Head key={x} x={x} y={y} />
            ))}
            <line x1="27" x2="41" y1="42" y2="42" stroke="#222" />
          </Staff>
        </div>
      </Win>

      {/* double REFLECT */}
      <Win className="left-[1605px] top-[717px] flex h-[146px] w-[194px]">
        <div className="flex w-[124px] flex-col pl-[4px]">
          <div className="mt-[4px] text-[15.5px] leading-[15px] text-[#dcdcdc]">double</div>
          <Title t="REFLECT" lam className="leading-[20px]!" />
          <div className="ml-[3px] mt-[24px] flex items-center gap-[7px] text-[12px] italic text-[#d0d0d0]">
            by intervals <Drop />
          </div>
          <div className="mt-[30px] flex items-center">
            <Lisp gap="gap-[5px]" />
            <Sep className="ml-[10px] h-[29px]" />
            <Help className="ml-[9px]" />
          </div>
        </div>
        <div className="my-px w-[67px] bg-white pl-[7px] pt-[28px]">
          <Staff w={53}>
            <Head x={34} y={21} />
            <Head x={33} y={63} />
          </Staff>
        </div>
      </Win>

      {/* HYBRIDIZE */}
      <Win className="left-[1575px] top-[884px] h-[88px] w-[151px] pl-[4px] pt-[4px]">
        <Title t="HYBRIDIZE" lam />
        <div className="ml-[12px] mt-[5px] flex items-center justify-between pr-[19px] text-[12px] italic text-[#d0d0d0]">
          by notes <Drop />
        </div>
        <div className="mt-[3px] flex items-center">
          <Lisp gap="gap-[3px]" />
          <Sep className="ml-[44px] h-[29px]" />
          <Help className="ml-[6px]" />
        </div>
      </Win>
    </div>
  );
}
